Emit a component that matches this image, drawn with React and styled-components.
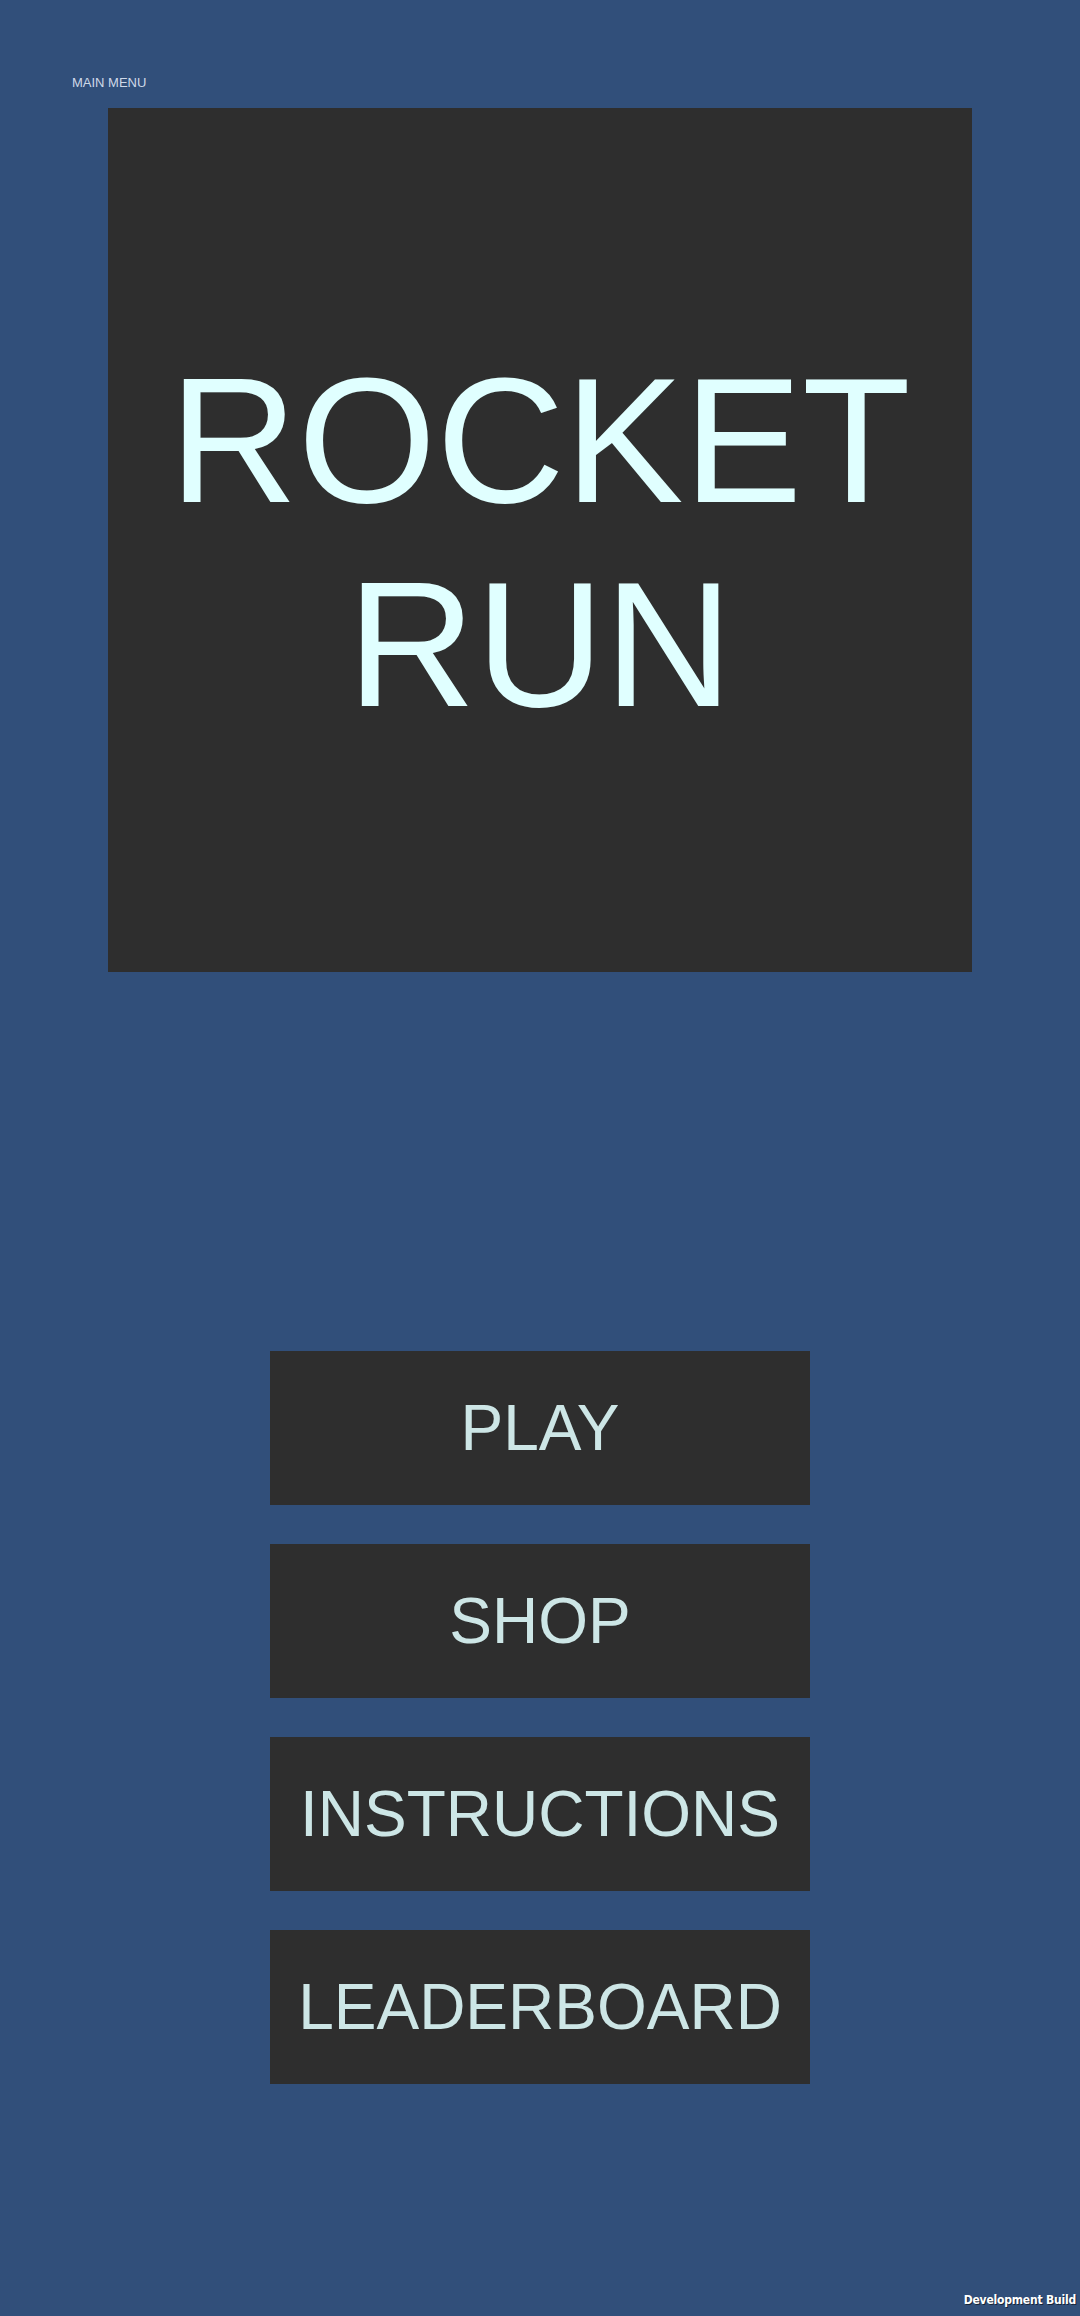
import React from 'react';
import styled, { createGlobalStyle } from 'styled-components';

const GlobalStyle = createGlobalStyle`
  html, body {
    margin: 0;
    padding: 0;
    background: #314f7a;
  }
`;

const Screen = styled.div`
  width: 1080px;
  min-height: 2316px;
  display: flex;
  flex-direction: column;
  background: #314f7a;
  font-family: "Liberation Sans", Arial, sans-serif;
`;

const MenuLabel = styled.div`
  margin: 75px 0 0 72px;
  height: 33px;
  font-size: 13px;
  line-height: 15px;
  color: #cfd9e8;
`;

const TitleCard = styled.div`
  width: 864px;
  height: 864px;
  margin: 0 auto;
  display: flex;
  align-items: center;
  justify-content: center;
  background: #2e2e2e;
`;

const Title = styled.h1`
  margin: 0;
  padding-top: 5px;
  font-weight: 400;
  font-size: 178px;
  line-height: 204px;
  text-align: center;
  color: #e0ffff;
`;

const ButtonStack = styled.div`
  display: flex;
  flex-direction: column;
  align-items: center;
  gap: 39px;
  margin-top: 379px;
`;

const MenuButton = styled.button`
  width: 540px;
  height: 154px;
  border: none;
  padding: 0;
  background: #2e2e2e;
  color: #cde6e6;
  font-family: "Liberation Sans", Arial, sans-serif;
  font-size: 64px;
  cursor: pointer;
`;

const Footer = styled.div`
  margin-top: auto;
  display: flex;
  justify-content: flex-end;
  padding: 0 4px 9px 0;
`;

const BuildTag = styled.span`
  font-family: "DejaVu Sans Condensed", "DejaVu Sans", sans-serif;
  font-weight: 700;
  font-size: 12px;
  line-height: 14px;
  letter-spacing: -0.2px;
  color: #ffffff;
  text-shadow: 1px 1px 0 rgba(0, 0, 0, 0.55);
`;

const buttons = ['PLAY', 'SHOP', 'INSTRUCTIONS', 'LEADERBOARD'];

const App = () => {
  return (
    <>
      <GlobalStyle />
      <Screen>
        <MenuLabel>MAIN MENU</MenuLabel>
        <TitleCard>
          <Title>
            ROCKET
            <br />
            RUN
          </Title>
        </TitleCard>
        <ButtonStack>
          {buttons.map(label => (
            <MenuButton key={label}>{label}</MenuButton>
          ))}
        </ButtonStack>
        <Footer>
          <BuildTag>Development Build</BuildTag>
        </Footer>
      </Screen>
    </>
  );
};

export default App;
